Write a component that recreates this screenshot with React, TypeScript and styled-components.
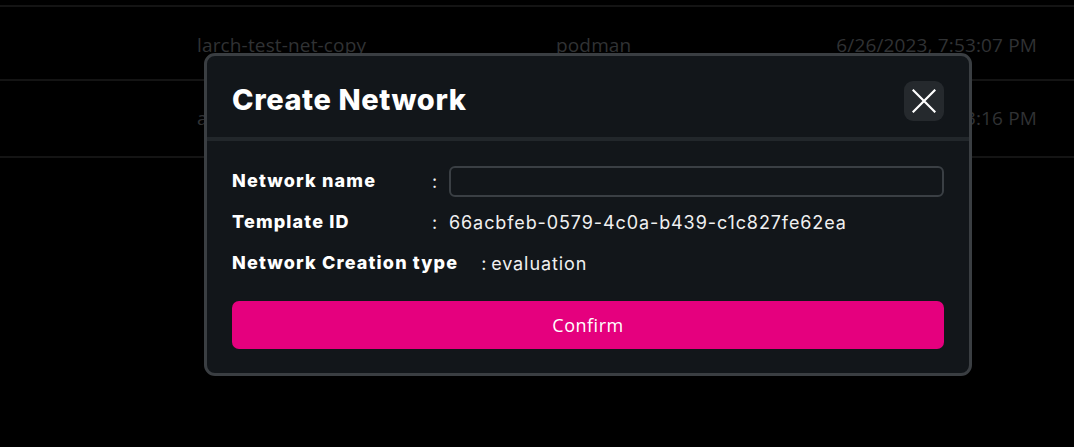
import React from "react";
import styled, { createGlobalStyle } from "styled-components";

const Global = createGlobalStyle`
  html, body { margin: 0; padding: 0; background: #000; }
  body { width: 1074px; height: 447px; overflow: hidden; font-family: "Open Sans", "Noto Sans", sans-serif; }
  * { box-sizing: border-box; }
`;

const Page = styled.div`
  position: relative;
  width: 1074px;
  height: 447px;
  background: #000;
  padding-top: 5px;
`;

const Table = styled.div`
  border-top: 2px solid #141414;
`;

const Row = styled.div`
  display: grid;
  grid-template-columns: 359px 1fr auto;
  align-items: center;
  height: 77px;
  padding: 0 37px 2px 197px;
  border-bottom: 2px solid #141414;
  font-family: "Open Sans", sans-serif;
  font-size: 19px;
  letter-spacing: 0.15px;
  color: #303234;

  &:first-child {
    height: 74px;
    padding-top: 3px;
    padding-bottom: 0;
  }
`;

const Cell = styled.div<{ $right?: boolean }>`
  text-align: ${(p) => (p.$right ? "right" : "left")};
  white-space: nowrap;
`;

const Dialog = styled.div`
  position: absolute;
  left: 204px;
  top: 53px;
  width: 768px;
  background: #12161a;
  border: 3px solid #3a3e42;
  border-radius: 11px;
  font-family: Inter, sans-serif;
  color: #fff;
`;

const Header = styled.div`
  display: flex;
  align-items: center;
  justify-content: space-between;
  padding: 25px 25px 16px 25px;
  border-bottom: 4px solid #22272b;
`;

const Title = styled.h2`
  margin: -3px 0 0 0;
  font-size: 29px;
  font-weight: 800;
  letter-spacing: 0.6px;
`;

const CloseButton = styled.button`
  width: 40px;
  height: 40px;
  border: none;
  border-radius: 9px;
  background: #25292d;
  display: flex;
  align-items: center;
  justify-content: center;
  padding: 0;
  cursor: pointer;
`;

const Body = styled.div`
  display: flex;
  flex-direction: column;
  padding: 25px 25px 24px 25px;
`;

const Fields = styled.div`
  display: flex;
  flex-direction: column;
  gap: 11px;
`;

const Field = styled.div`
  display: flex;
  align-items: center;
  height: 30px;
`;

const Label = styled.div`
  min-width: 200px;
  padding-right: 23px;
  flex-shrink: 0;
  font-size: 18px;
  font-weight: 800;
  letter-spacing: 1.15px;
  white-space: nowrap;
  margin-top: -2px;
`;

const Colon = styled.span<{ $tight?: boolean }>`
  font-size: 18px;
  font-weight: 400;
  color: #f0f0f0;
  width: ${(p) => (p.$tight ? "10px" : "17px")};
  flex-shrink: 0;
`;

const Value = styled.span`
  font-size: 18px;
  font-weight: 400;
  letter-spacing: 0.9px;
  color: #f0f0f0;
`;

const Input = styled.input`
  flex: 1;
  height: 31px;
  background: transparent;
  border: 2px solid #3a3f44;
  border-radius: 6px;
  color: #fff;
  font-size: 16px;
  outline: none;
`;

const Confirm = styled.button`
  margin-top: 23px;
  height: 48px;
  border: none;
  border-radius: 7px;
  background: #e5007e;
  color: #fff;
  font-family: "Open Sans", sans-serif;
  font-size: 18px;
  font-weight: 400;
  letter-spacing: 0.5px;
  cursor: pointer;
`;

export default function App() {
  return (
    <Page>
      <Global />
      <Table>
        <Row>
          <Cell>larch-test-net-copy</Cell>
          <Cell>podman</Cell>
          <Cell $right>6/26/2023, 7:53:07 PM</Cell>
        </Row>
        <Row>
          <Cell>a</Cell>
          <Cell></Cell>
          <Cell $right>6/26/2023, 7:53:16 PM</Cell>
        </Row>
      </Table>
      <Dialog>
        <Header>
          <Title>Create Network</Title>
          <CloseButton aria-label="Close">
            <svg width="24" height="24" viewBox="0 0 24 24">
              <path d="M1.5 1.5 L22.5 22.5 M22.5 1.5 L1.5 22.5" stroke="#fff" strokeWidth="2.2" strokeLinecap="square" />
            </svg>
          </CloseButton>
        </Header>
        <Body>
          <Fields>
            <Field>
              <Label>Network name</Label>
              <Colon>:</Colon>
              <Input />
            </Field>
            <Field>
              <Label>Template ID</Label>
              <Colon>:</Colon>
              <Value>66acbfeb-0579-4c0a-b439-c1c827fe62ea</Value>
            </Field>
            <Field>
              <Label>Network Creation type</Label>
              <Colon $tight>:</Colon>
              <Value>evaluation</Value>
            </Field>
          </Fields>
          <Confirm>Confirm</Confirm>
        </Body>
      </Dialog>
    </Page>
  );
}
